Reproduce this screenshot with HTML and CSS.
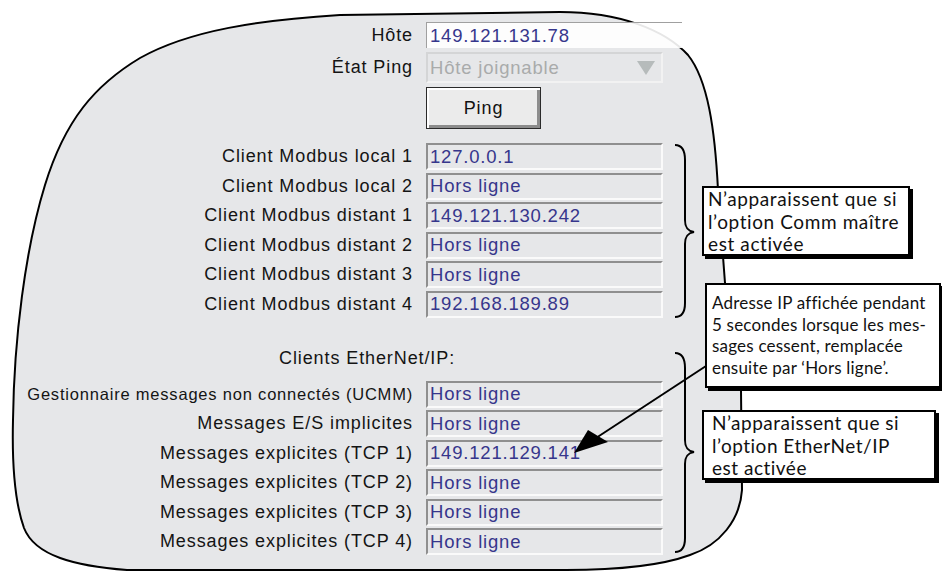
FILE: index.html
```html
<!DOCTYPE html>
<html lang="fr">
<head>
<meta charset="UTF-8">
<meta name="viewport" content="width=device-width, initial-scale=1.0">
<title>Clients réseau</title>
<link rel="stylesheet" href="styles.css">
</head>
<body>
  <div class="stage">
    <!-- fond de l'écran -->
    <svg class="blob" width="942" height="572" viewBox="0 0 942 572">
      <path d="M127 570 C75 566 35 556 24 528 C14 500 12 460 13 420 C14 340 25 250 45 185 C65 120 95 85 140 58 C190 30 260 20 340 15 L560 12 C620 12 665 30 688 55 C708 80 715 130 718 190 L725 283 L741 390 L742 490 C740 520 720 545 690 555 C660 566 620 570 566 570 Z"/>
    </svg>

    <div class="form">
      <div class="row row-host">
        <span class="label">Hôte</span>
        <span class="field field-host">149.121.131.78</span>
      </div>
      <div class="row row-state">
        <span class="label">État Ping</span>
        <span class="field field-select">Hôte joignable
          <svg class="caret" width="18" height="14" viewBox="0 0 18 14"><polygon points="0,0 18,0 9,14"/></svg>
        </span>
      </div>
      <div class="row row-ping">
        <span></span>
        <button class="btn">Ping</button>
      </div>

      <div class="group">
        <div class="row"><span class="label">Client Modbus local 1</span><span class="field">127.0.0.1</span></div>
        <div class="row"><span class="label">Client Modbus local 2</span><span class="field">Hors ligne</span></div>
        <div class="row"><span class="label">Client Modbus distant 1</span><span class="field">149.121.130.242</span></div>
        <div class="row"><span class="label">Client Modbus distant 2</span><span class="field">Hors ligne</span></div>
        <div class="row"><span class="label">Client Modbus distant 3</span><span class="field">Hors ligne</span></div>
        <div class="row"><span class="label">Client Modbus distant 4</span><span class="field">192.168.189.89</span></div>
      </div>

      <div class="caption">Clients EtherNet/IP:</div>

      <div class="group">
        <div class="row"><span class="label label-small">Gestionnaire messages non connectés (UCMM)</span><span class="field">Hors ligne</span></div>
        <div class="row"><span class="label">Messages E/S implicites</span><span class="field">Hors ligne</span></div>
        <div class="row"><span class="label">Messages explicites (TCP 1)</span><span class="field">149.121.129.141</span></div>
        <div class="row"><span class="label">Messages explicites (TCP 2)</span><span class="field">Hors ligne</span></div>
        <div class="row"><span class="label">Messages explicites (TCP 3)</span><span class="field">Hors ligne</span></div>
        <div class="row"><span class="label">Messages explicites (TCP 4)</span><span class="field">Hors ligne</span></div>
      </div>
    </div>

    <!-- accolades et flèche -->
    <svg class="marks" width="942" height="572" viewBox="0 0 942 572">
      <path class="brace" d="M675 145 C682 145 685 150 685 160 L685 220 C685 228 688 231 694 232 C688 233 685 236 685 244 L685 303 C685 312 682 317 675 317"/>
      <path class="brace" d="M675 353 C682 353 685 358 685 368 L685 440 C685 448 688 451 694 452 C688 453 685 456 685 464 L685 538 C685 547 682 552 675 552"/>
      <line class="arrow-line" x1="706" y1="366" x2="596" y2="438"/>
      <polygon class="arrow-head" points="574,453 588,430 608,442"/>
    </svg>

    <div class="note note-comm">N’apparaissent que si<br>l’option Comm maître<br>est activée</div>
    <div class="note note-ip">Adresse IP affichée pendant<br>5 secondes lorsque les mes-<br>sages cessent, remplacée<br>ensuite par ‘Hors ligne’.</div>
    <div class="note note-eip">N’apparaissent que si<br>l’option EtherNet/IP<br>est activée</div>
  </div>
</body>
</html>
```

FILE: styles.css
```css
body {
  margin: 0;
  background-color: #fff;
  font-family: "Liberation Sans", Arial, sans-serif;
  color: #141414;
}
.stage {
  position: relative;
  width: 942px;
  height: 572px;
  overflow: hidden;
}
.blob, .marks {
  position: absolute;
  left: 0;
  top: 0;
}
.marks {
  pointer-events: none;
}
.blob path {
  fill: #e6e7e9;
  stroke: #000;
  stroke-width: 2;
}
.form {
  position: relative;
  padding-top: 22px;
}
.row {
  display: grid;
  grid-template-columns: 413px 237px;
  column-gap: 13px;
  align-items: center;
  height: 27px;
}
.label {
  text-align: right;
  font-size: 18px;
  letter-spacing: 0.9px;
  white-space: nowrap;
}
.label-small {
  font-size: 16.5px;
  letter-spacing: 0.8px;
}
.row-host {
  height: 26px;
  margin-bottom: 4px;
}
.row-state {
  height: 31px;
  margin-bottom: 4px;
}
.row-ping {
  height: 42px;
  margin-bottom: 14px;
}
.group {
  display: grid;
  grid-auto-rows: 27px;
  row-gap: 2.5px;
}
.field {
  box-sizing: border-box;
  height: 100%;
  display: flex;
  align-items: center;
  padding-left: 2px;
  border-top: 2px solid #8f8f8f;
  border-left: 2px solid #8f8f8f;
  border-bottom: 2px solid #fafafa;
  border-right: 2px solid #fafafa;
  color: #36368c;
  font-size: 18.5px;
  letter-spacing: 0.8px;
  white-space: nowrap;
}
.field-host {
  width: 256px;
  background-color: rgba(255, 255, 255, 0.9);
  border-top: 1px solid #a0a0a0;
  border-left: 1px solid #a0a0a0;
  border-bottom: none;
  border-right: none;
  padding-left: 3px;
}
.field-select {
  justify-content: space-between;
  padding-right: 6px;
  border: 2px solid #d4d5d6;
  border-bottom-color: #f2f2f2;
  border-right-color: #f2f2f2;
  color: #a9abab;
}
.caret polygon {
  fill: #b6bbbb;
}
.btn {
  justify-self: start;
  width: 115px;
  height: 42px;
  padding: 0;
  font-family: "Liberation Sans", Arial, sans-serif;
  font-size: 18px;
  letter-spacing: 0.9px;
  color: #111;
  background-color: #ebebeb;
  border: 1px solid #2a2a2a;
  box-shadow: inset 2px 2px 0 #fff, inset -3px -3px 0 #8c8c8c;
}
.caption {
  margin: 30px 0 13px 279px;
  height: 20px;
  line-height: 20px;
  font-size: 18px;
  letter-spacing: 0.9px;
}
.brace {
  fill: none;
  stroke: #000;
  stroke-width: 2;
}
.arrow-line {
  stroke: #000;
  stroke-width: 2;
}
.arrow-head {
  fill: #000;
}
.note {
  position: absolute;
  box-sizing: border-box;
  background-color: #fff;
  border: 2px solid #000;
  box-shadow: 3px 3px 0 #000;
  font-family: Lato, "Open Sans", sans-serif;
  color: #111;
  white-space: nowrap;
}
.note-comm {
  left: 702px;
  top: 186px;
  width: 208px;
  height: 70px;
  padding: 0 4px;
  font-size: 19px;
  line-height: 22.5px;
  letter-spacing: 0.6px;
}
.note-ip {
  left: 705px;
  top: 283px;
  width: 236px;
  height: 105px;
  padding: 7px 5px;
  font-size: 17px;
  line-height: 21.7px;
  letter-spacing: 0.2px;
}
.note-eip {
  left: 702px;
  top: 410px;
  width: 234px;
  height: 70px;
  padding: 0 8px;
  font-size: 19px;
  line-height: 22.5px;
  letter-spacing: 0.5px;
}
```
